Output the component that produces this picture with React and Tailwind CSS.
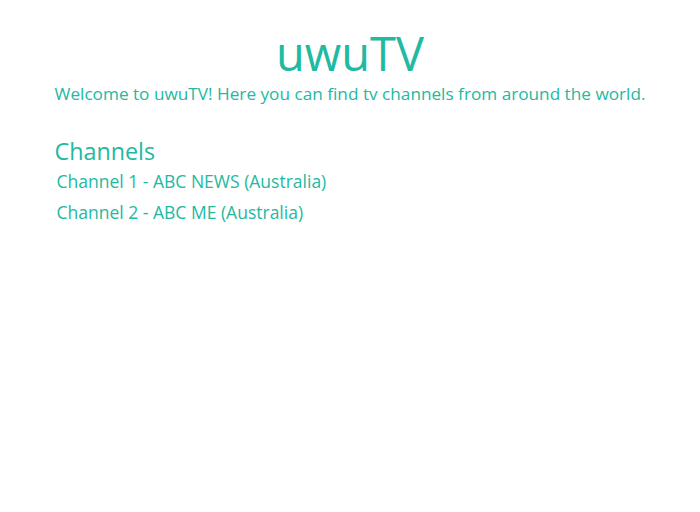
export default function App() {
  const channels = [
    "Channel 1 - ABC NEWS (Australia)",
    "Channel 2 - ABC ME (Australia)",
  ];

  return (
    <div
      className="flex min-h-screen justify-center bg-white text-[#22b9a2]"
      style={{ fontFamily: '"Open Sans", sans-serif' }}
    >
      <div className="flex flex-col pt-[24px]">
        <h1 className="text-center text-[47px] leading-[58px]">uwuTV</h1>
        <p className="mt-[1px] text-center text-[17.2px] leading-[22px]">
          Welcome to uwuTV! Here you can find tv channels from around the world.
        </p>
        <h2 className="mt-[31px] text-[23.3px] leading-[30px]">Channels</h2>
        <ul className="mt-[4px] flex flex-col gap-[9px] pl-[2px]">
          {channels.map((c) => (
            <li key={c} className="text-[17.5px] leading-[22px]">
              {c}
            </li>
          ))}
        </ul>
      </div>
    </div>
  );
}
